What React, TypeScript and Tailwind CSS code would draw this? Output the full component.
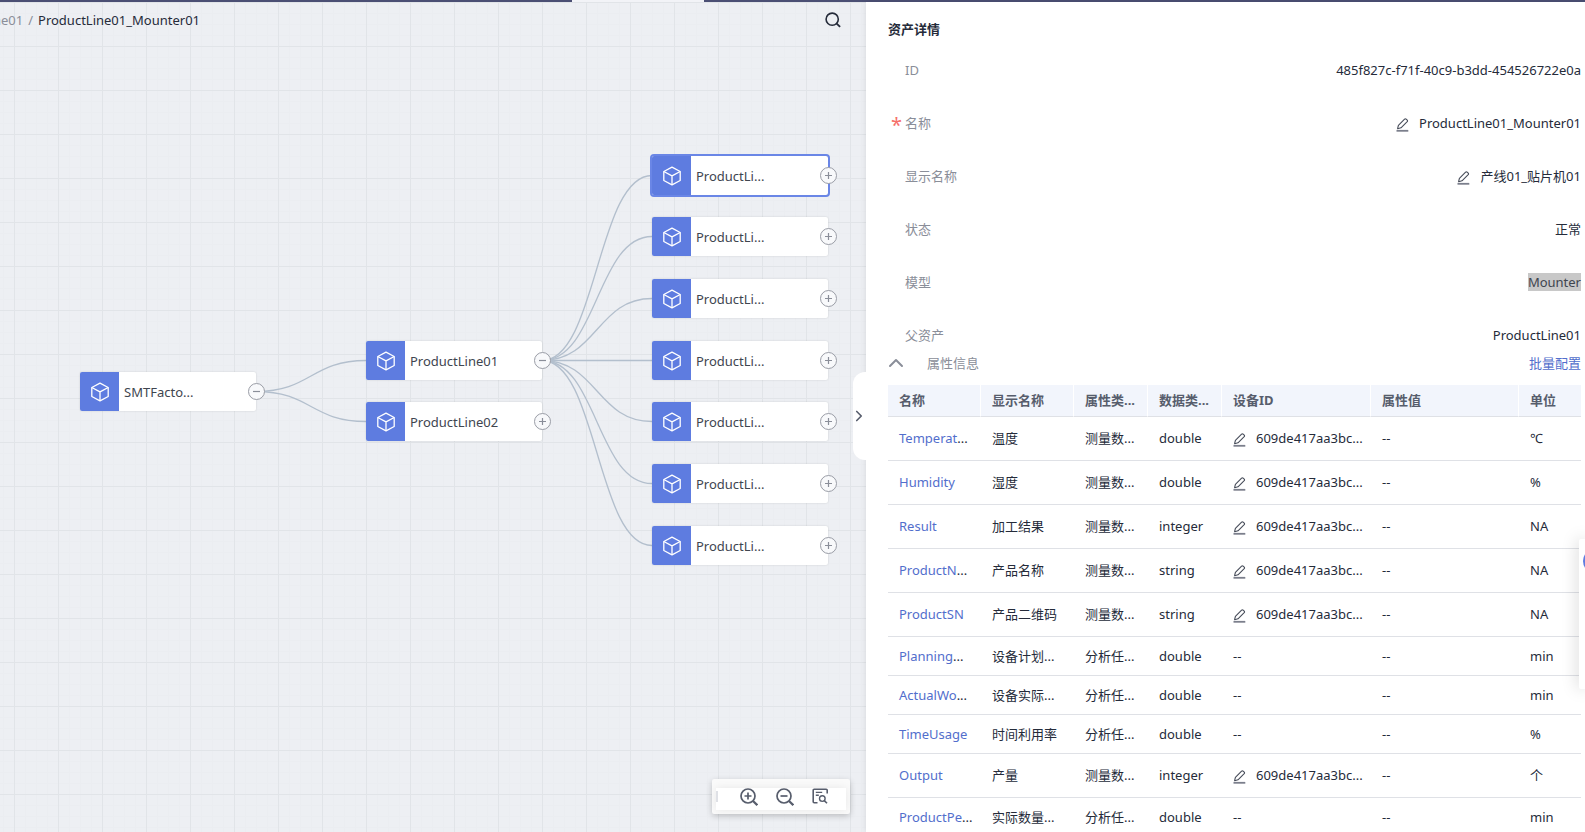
import { ChevronRight, ChevronUp } from "lucide-react";

const NODE_WIDTH = 176;
const NODE_HEIGHT = 39;

const nodes = [
  { id: "root", label: "SMTFacto...", x: 80, y: 370, open: true },
  { id: "line1", label: "ProductLine01", x: 366, y: 339, open: true },
  { id: "line2", label: "ProductLine02", x: 366, y: 400, open: false },
  { id: "m1", label: "ProductLi...", x: 652, y: 154, open: false, selected: true },
  { id: "m2", label: "ProductLi...", x: 652, y: 215, open: false },
  { id: "m3", label: "ProductLi...", x: 652, y: 277, open: false },
  { id: "m4", label: "ProductLi...", x: 652, y: 339, open: false },
  { id: "m5", label: "ProductLi...", x: 652, y: 400, open: false },
  { id: "m6", label: "ProductLi...", x: 652, y: 462, open: false },
  { id: "m7", label: "ProductLi...", x: 652, y: 524, open: false },
];

const edges = [
  ["root", "line1"],
  ["root", "line2"],
  ["line1", "m1"],
  ["line1", "m2"],
  ["line1", "m3"],
  ["line1", "m4"],
  ["line1", "m5"],
  ["line1", "m6"],
  ["line1", "m7"],
];

const details = [
  { label: "ID", value: "485f827c-f71f-40c9-b3dd-454526722e0a" },
  { label: "名称", value: "ProductLine01_Mounter01", required: true, editable: true },
  { label: "显示名称", value: "产线01_贴片机01", editable: true },
  { label: "状态", value: "正常" },
  { label: "模型", value: "Mounter", marked: true },
  { label: "父资产", value: "ProductLine01" },
];

const columns = [
  { title: "名称", width: "w-[93px]" },
  { title: "显示名称", width: "w-[93px]" },
  { title: "属性类...", width: "w-[74px]" },
  { title: "数据类...", width: "w-[74px]" },
  { title: "设备ID", width: "w-[149px]" },
  { title: "属性值", width: "w-[148px]" },
  { title: "单位", width: "" },
];

const DEVICE = "609de417aa3bc...";

const attributes = [
  { name: "Temperat", cut: true, display: "温度", kind: "测量数...", type: "double", device: DEVICE, unit: "℃" },
  { name: "Humidity", display: "湿度", kind: "测量数...", type: "double", device: DEVICE, unit: "%" },
  { name: "Result", display: "加工结果", kind: "测量数...", type: "integer", device: DEVICE, unit: "NA" },
  { name: "ProductN", cut: true, display: "产品名称", kind: "测量数...", type: "string", device: DEVICE, unit: "NA" },
  { name: "ProductSN", display: "产品二维码", kind: "测量数...", type: "string", device: DEVICE, unit: "NA" },
  { name: "Planning", cut: true, display: "设备计划...", kind: "分析任...", type: "double", unit: "min" },
  { name: "ActualWo", cut: true, display: "设备实际...", kind: "分析任...", type: "double", unit: "min" },
  { name: "TimeUsage", display: "时间利用率", kind: "分析任...", type: "double", unit: "%" },
  { name: "Output", display: "产量", kind: "测量数...", type: "integer", device: DEVICE, unit: "个" },
  { name: "ProductPe", cut: true, display: "实际数量...", kind: "分析任...", type: "double", unit: "min" },
];

function CubeIcon() {
  return (
    <svg viewBox="0 0 20 20" className="size-5" fill="none" stroke="currentColor" strokeWidth="1.3" strokeLinejoin="round">
      <path d="M10 1.2 18.2 5.5v9L10 18.8 1.8 14.5v-9z" />
      <path d="M1.8 5.5 10 9.8l8.2-4.3M10 9.8v9" />
    </svg>
  );
}

function SearchIcon() {
  return (
    <svg viewBox="0 0 16 16" className="size-4" fill="none" stroke="currentColor" strokeWidth="1.6">
      <circle cx="7.2" cy="7.2" r="6.1" />
      <path d="m11.4 11.4 3.7 3.5" strokeWidth="1.9" />
    </svg>
  );
}

function ZoomIcon({ sign }) {
  return (
    <svg viewBox="0 0 18 18" className="size-[18px]" fill="none" stroke="currentColor" strokeWidth="1.7">
      <circle cx="8" cy="8" r="7" />
      <path d="m13 13 4.3 4.2" strokeWidth="2.2" />
      <path d={sign} />
    </svg>
  );
}

function PencilIcon() {
  return (
    <svg viewBox="0 0 13 14" className="h-3.5 w-[13px]" fill="none">
      <path
        d="M1.6 10.7 2.4 7.3 8.6 1.2Q9.4.5 10.2 1.2L11.2 2.2Q11.9 2.9 11.2 3.7L5 9.8Z"
        stroke="#464c59"
        strokeWidth="1.1"
        strokeLinejoin="round"
      />
      <path d="M.5 12.8h11.8" stroke="#7b7f8c" strokeWidth="1.8" />
    </svg>
  );
}

function OverviewIcon() {
  return (
    <svg viewBox="0 0 16 16" className="size-4" fill="none" stroke="currentColor">
      <path d="M5.5 14.8H2.2a1 1 0 0 1-1-1V2.2a1 1 0 0 1 1-1h12a1 1 0 0 1 1 1v3.3" strokeWidth="1.6" />
      <path d="M3.8 4.4h6.4M3.8 7.2h3" strokeWidth="1.4" />
      <circle cx="10.3" cy="10.6" r="2.8" strokeWidth="1.4" />
      <path d="m12.3 12.6 2.7 2.7" strokeWidth="1.6" />
    </svg>
  );
}

function TreeNode({ node }) {
  return (
    <div
      className={`absolute flex h-[39px] w-44 items-center rounded-xs bg-white shadow-[0_0_2px_rgba(0,0,0,0.15)] ${
        node.selected ? "outline-2 outline-[#6a86e6]" : ""
      }`}
      style={{ left: node.x, top: node.y }}
    >
      <div className="flex h-full w-[39px] items-center justify-center rounded-l-xs bg-[#5e7ce0] text-white">
        <CubeIcon />
      </div>
      <span className="pl-[5px] text-[#40454f]">{node.label}</span>
      <button
        type="button"
        aria-label={node.open ? "收起" : "展开"}
        className="absolute top-[11px] -right-[9px] flex size-[17px] items-center justify-center rounded-full border border-[#9a9da6] bg-[#f8f9fb] text-[#8a8e99]"
      >
        <svg viewBox="0 0 15 15" className="size-[15px]" stroke="currentColor" strokeWidth="1.2">
          <path d={node.open ? "M4 7.5h7" : "M4 7.5h7M7.5 4v7"} />
        </svg>
      </button>
    </div>
  );
}

function Edges() {
  const find = (id: string) => nodes.find((node) => node.id === id)!;

  return (
    <svg className="absolute inset-0 h-full w-full" fill="none" stroke="#b3bfcd" strokeWidth="1.3">
      {edges.map(([from, to]) => {
        const x1 = find(from).x + NODE_WIDTH;
        const y1 = find(from).y + NODE_HEIGHT / 2;
        const x2 = find(to).x;
        const y2 = find(to).y + NODE_HEIGHT / 2;
        const mid = (x1 + x2) / 2;
        return <path key={to} d={`M${x1} ${y1}C${mid} ${y1} ${mid} ${y2} ${x2} ${y2}`} />;
      })}
    </svg>
  );
}

function AssetTree() {
  return (
    <main className="relative min-w-0 flex-1 overflow-hidden bg-[#edeff3] bg-[linear-gradient(to_right,#e1e4e8_1px,transparent_1px),linear-gradient(to_bottom,#e1e4e8_1px,transparent_1px),linear-gradient(to_right,#ebedf1_1px,transparent_1px),linear-gradient(to_bottom,#ebedf1_1px,transparent_1px)] [background-position:14px_0px] [background-size:44px_44px,44px_44px,11px_11px,11px_11px]">
      <Edges />
      {nodes.map((node) => (
        <TreeNode key={node.id} node={node} />
      ))}
      <div className="relative flex h-9 items-center justify-between pr-[25px]">
        <nav className="flex w-[200px] justify-end gap-[5px] overflow-hidden whitespace-nowrap text-[#8a8e99]">
          <a href="#line">ProductLine01</a>
          <span>/</span>
          <span className="text-[#252b3a]">ProductLine01_Mounter01</span>
        </nav>
        <button type="button" aria-label="搜索" className="text-[#252b3a]">
          <SearchIcon />
        </button>
      </div>
      <div className="absolute right-4 bottom-[18px] rounded-xs bg-[#fafafa] px-1 pt-[9px] pb-1 shadow-[0_2px_6px_rgba(0,0,0,0.2)]">
        <div className="flex h-[22px] w-[130px] items-start bg-white text-[#575d6c] shadow-[0_0_8px_rgba(0,0,0,0.08)]">
          <span className="mt-[3px] h-[11px] w-0.5 bg-[#dfe1e6]" />
          <button type="button" aria-label="放大" className="ml-[22px]">
            <ZoomIcon sign="M4.5 8h7M8 4.5v7" />
          </button>
          <button type="button" aria-label="缩小" className="ml-[18px]">
            <ZoomIcon sign="M4.5 8h7" />
          </button>
          <button type="button" aria-label="概览" className="ml-[18px]">
            <OverviewIcon />
          </button>
        </div>
      </div>
    </main>
  );
}

function DetailList() {
  return (
    <dl className="mt-[15px] flex flex-col gap-[25px]">
      {details.map((item) => (
        <div key={item.label} className="flex h-7 items-center justify-between">
          <dt className="flex w-32 items-center text-[#8a8e99]">
            <span className="w-[17px] pt-1 pl-[3px] text-xl leading-5 text-[#f66f6a]">{item.required ? "*" : ""}</span>
            {item.label}
          </dt>
          <dd className="flex items-center gap-2.5">
            {item.editable && (
              <button type="button" aria-label={`编辑${item.label}`} className="pt-[3px]">
                <PencilIcon />
              </button>
            )}
            <span className={item.marked ? "bg-[#c8c8c8] leading-[18px] text-[#40454f]" : ""}>{item.value}</span>
          </dd>
        </div>
      ))}
    </dl>
  );
}

function AttributeTable() {
  return (
    <table className="mt-2 w-full table-fixed border-separate border-spacing-0 text-left whitespace-nowrap">
      <thead>
        <tr className="h-8 bg-[#f2f5fc] text-[#575d6c]">
          {columns.map((column) => (
            <th
              key={column.title}
              className={`border-r border-b border-r-white border-b-[#dfe1e6] pb-0.5 pl-[11px] font-bold last:border-r-0 ${column.width}`}
            >
              {column.title}
            </th>
          ))}
        </tr>
      </thead>
      <tbody>
        {attributes.map((row) => (
          <tr
            key={row.name}
            className={`*:border-b *:border-[#dfe1e6] *:pb-px *:pl-[11px] ${row.device ? "h-11" : "h-[39px]"}`}
          >
            <td>
              <a href={`#${row.name}`} className="text-[#526ecc]">
                {row.name}
              </a>
              {row.cut && "..."}
            </td>
            <td>{row.display}</td>
            <td>{row.kind}</td>
            <td>{row.type}</td>
            <td>
              {row.device ? (
                <div className="flex items-center gap-2.5">
                  <button type="button" aria-label="编辑设备ID" className="pt-1">
                    <PencilIcon />
                  </button>
                  {row.device}
                </div>
              ) : (
                "--"
              )}
            </td>
            <td>--</td>
            <td>{row.unit}</td>
          </tr>
        ))}
      </tbody>
    </table>
  );
}

function AssetPanel() {
  return (
    <aside className="relative w-[719px] shrink-0 bg-white pr-1 pl-[22px] shadow-[0_0_6px_rgba(0,0,0,0.1)]">
      <button
        type="button"
        aria-label="收起面板"
        className="absolute top-[370px] -left-[13px] flex h-22 w-[13px] items-center justify-center rounded-l-xl bg-white pr-px text-[#575d6c]"
      >
        <ChevronRight size={18} strokeWidth={2.2} className="shrink-0" />
      </button>
      <h2 className="pt-[15px] leading-6 font-bold">资产详情</h2>
      <DetailList />
      <div className="flex h-7 items-center">
        <button type="button" className="-ml-1 flex items-center gap-[19px] text-[#8a8e99]">
          <ChevronUp size={24} strokeWidth={2} />
          属性信息
        </button>
        <a href="#batch" className="ml-auto text-[#526ecc]">
          批量配置
        </a>
      </div>
      <AttributeTable />
    </aside>
  );
}

export default function App() {
  return (
    <div className="relative flex h-screen flex-col overflow-hidden font-['Noto_Sans','Noto_Sans_CJK_SC',sans-serif] text-[13px] leading-5 text-[#252b3a]">
      <div className="flex h-0.5 shrink-0 bg-[#4b4f74]">
        <div className="ml-[572px] w-[132px] bg-[#f2f3f7]" />
      </div>
      <div className="flex min-h-0 flex-1">
        <AssetTree />
        <AssetPanel />
      </div>
      <div className="absolute top-[539px] right-0 h-[150px] w-1.5 overflow-hidden rounded-l-xs bg-white shadow-[0_0_16px_rgba(0,0,0,0.25)]">
        <div className="mt-2.5 ml-1 size-6 rounded-full bg-[#5e7ce0]" />
      </div>
    </div>
  );
}
